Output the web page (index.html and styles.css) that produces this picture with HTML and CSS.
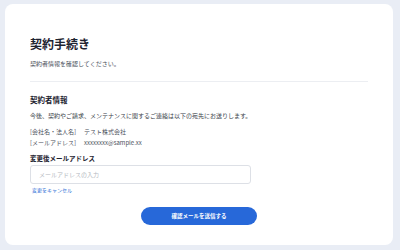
FILE: index.html
```html
<!DOCTYPE html>
<html lang="ja">
<head>
<meta charset="utf-8">
<link rel="stylesheet" href="styles.css">
</head>
<body>
<main class="card">
  <h1 class="title">契約手続き</h1>
  <p class="lead">契約者情報を確認してください。</p>
  <hr class="divider">
  <h2 class="section-title">契約者情報</h2>
  <p class="desc">今後、契約やご請求、メンテナンスに関するご連絡は以下の宛先にお送りします。</p>
  <div class="info">
    <div class="info-row"><span class="info-key">[会社名・法人名]</span><span>テスト株式会社</span></div>
    <div class="info-row"><span class="info-key">[メールアドレス]</span><span>xxxxxxxx@sample.xx</span></div>
  </div>
  <label class="field-label" for="email">変更後メールアドレス</label>
  <input class="field-input" id="email" type="text" placeholder="メールアドレスの入力">
  <a class="cancel" href="#">変更をキャンセル</a>
  <div class="actions">
    <button class="submit" type="button">確認メールを送信する</button>
  </div>
</main>
</body>
</html>
```
FILE: styles.css
```css
* { box-sizing: border-box; }
html, body { margin: 0; }
body {
  width: 400px;
  height: 250px;
  background: #e9edf5;
  padding: 4px 7px 5px 5px;
  font-family: "Noto Sans CJK JP", "Noto Sans", sans-serif;
  color: #3a3f4a;
}
.card {
  height: 241px;
  background: #ffffff;
  border-radius: 8px;
  padding: 32px 25px 0 25px;
  display: flex;
  flex-direction: column;
}
.title {
  margin: 0;
  font-size: 12px;
  line-height: 16px;
  font-weight: 700;
  color: #1e2330;
}
.lead {
  margin: 7px 0 0;
  font-size: 6px;
  line-height: 9px;
  color: #4a4f5a;
}
.divider {
  margin: 13px 0 0;
  border: 0;
  border-top: 1px solid #eceef2;
  height: 0;
}
.section-title {
  margin: 13px 0 0;
  font-size: 7.5px;
  line-height: 10px;
  font-weight: 700;
  color: #1e2330;
}
.desc {
  margin: 6px 0 0;
  font-size: 6px;
  line-height: 9px;
  color: #3a3f4a;
}
.info {
  margin-top: 6px;
  display: flex;
  flex-direction: column;
}
.info-row {
  font-size: 6px;
  line-height: 11px;
  color: #4a4f5a;
}
.info-key { margin-right: 8px; }
.field-label {
  margin-top: 6px;
  font-size: 6.5px;
  line-height: 9px;
  font-weight: 700;
  color: #1e2330;
}
.field-input {
  margin-top: 2px;
  width: 221px;
  height: 19px;
  border: 1px solid #dde0e6;
  border-radius: 3px;
  padding: 0 8px;
  font-family: inherit;
  font-size: 6px;
  color: #333;
  outline: none;
}
.field-input::placeholder { color: #b4b8c0; }
.cancel {
  margin-top: 2px;
  margin-left: 2px;
  font-size: 5px;
  line-height: 8px;
  color: #2f6fd6;
  text-decoration: none;
  align-self: flex-start;
}
.actions {
  margin-top: 13px;
  display: flex;
  justify-content: center;
}
.submit {
  width: 116px;
  height: 18px;
  border: 0;
  border-radius: 9px;
  background: #2768d9;
  color: #ffffff;
  font-family: inherit;
  font-size: 5.5px;
  font-weight: 700;
  padding: 0;
}
```
